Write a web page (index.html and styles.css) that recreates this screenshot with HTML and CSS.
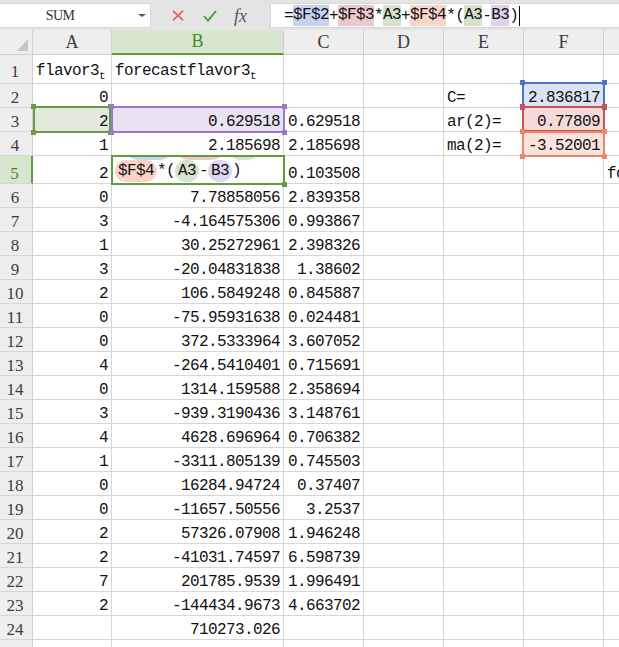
FILE: index.html
```html
<!DOCTYPE html>
<html>
<head>
<meta charset="utf-8">
<title>Sheet</title>
<link rel="stylesheet" href="styles.css">
</head>
<body>
<div class="app">
  <div class="toolbar">
    <div class="namebox"><span class="name">SUM</span><span class="dd"></span></div>
    <div class="tools">
      <svg class="ico-x" width="12" height="11" viewBox="0 0 12 11"><path d="M1 0.8 L11 10.2 M11 0.8 L1 10.2" stroke="#e0605c" stroke-width="1.6" fill="none"/></svg>
      <svg class="ico-ok" width="14" height="12" viewBox="0 0 14 12"><path d="M1 6 L5 10.5 L13 1" stroke="#3f9a3f" stroke-width="1.8" fill="none"/></svg>
      <span class="fx">fx</span>
    </div>
    <div class="formula">=<span class="hl hb">$F$2</span>+<span class="hl hr">$F$3</span>*<span class="hl hg">A3</span>+<span class="hl hs">$F$4</span>*(<span class="hl hg">A3</span>-<span class="hl hp">B3</span>)<span class="caret"></span></div>
  </div>

  <div class="sheet">
    <div class="c corner"><span class="tri"></span></div>
    <div class="c ch">A</div><div class="c ch sel">B</div><div class="c ch">C</div><div class="c ch">D</div><div class="c ch">E</div><div class="c ch">F</div><div class="c ch"></div>

    <div class="c rh r1">1</div><div class="c t r1"><span>flavor3<sub>t</sub></span></div><div class="c t r1"><span>forecastflavor3<sub>t</sub></span></div><div class="c"></div><div class="c"></div><div class="c"></div><div class="c"></div><div class="c"></div>

    <div class="c rh">2</div><div class="c n">0</div><div class="c"></div><div class="c"></div><div class="c"></div><div class="c t">C=</div><div class="c n fb">2.836817</div><div class="c"></div>

    <div class="c rh">3</div><div class="c n fa">2</div><div class="c n fp">0.629518</div><div class="c n">0.629518</div><div class="c"></div><div class="c t">ar(2)=</div><div class="c n fr">0.77809</div><div class="c"></div>

    <div class="c rh">4</div><div class="c n">1</div><div class="c n">2.185698</div><div class="c n">2.185698</div><div class="c"></div><div class="c t">ma(2)=</div><div class="c n fs">-3.52001</div><div class="c"></div>

    <div class="c rh sel">5</div><div class="c n">2</div>
    <div class="c editor">
      <div class="ghost"><span class="gp pb g1"></span><span class="gp pr g2"></span><span class="gp pg g3"></span></div>
      <div class="line"><span class="pill ps">$F$4</span>*(<span class="pill pg">A3</span>-<span class="pill pp">B3</span>)</div>
    </div>
    <div class="c n">0.103508</div><div class="c"></div><div class="c"></div><div class="c"></div><div class="c t">fo</div>

    <div class="c rh">6</div><div class="c n">0</div><div class="c n">7.78858056</div><div class="c n">2.839358</div><div class="c"></div><div class="c"></div><div class="c"></div><div class="c"></div>
    <div class="c rh">7</div><div class="c n">3</div><div class="c n">-4.164575306</div><div class="c n">0.993867</div><div class="c"></div><div class="c"></div><div class="c"></div><div class="c"></div>
    <div class="c rh">8</div><div class="c n">1</div><div class="c n">30.25272961</div><div class="c n">2.398326</div><div class="c"></div><div class="c"></div><div class="c"></div><div class="c"></div>
    <div class="c rh">9</div><div class="c n">3</div><div class="c n">-20.04831838</div><div class="c n">1.38602</div><div class="c"></div><div class="c"></div><div class="c"></div><div class="c"></div>
    <div class="c rh">10</div><div class="c n">2</div><div class="c n">106.5849248</div><div class="c n">0.845887</div><div class="c"></div><div class="c"></div><div class="c"></div><div class="c"></div>
    <div class="c rh">11</div><div class="c n">0</div><div class="c n">-75.95931638</div><div class="c n">0.024481</div><div class="c"></div><div class="c"></div><div class="c"></div><div class="c"></div>
    <div class="c rh">12</div><div class="c n">0</div><div class="c n">372.5333964</div><div class="c n">3.607052</div><div class="c"></div><div class="c"></div><div class="c"></div><div class="c"></div>
    <div class="c rh">13</div><div class="c n">4</div><div class="c n">-264.5410401</div><div class="c n">0.715691</div><div class="c"></div><div class="c"></div><div class="c"></div><div class="c"></div>
    <div class="c rh">14</div><div class="c n">0</div><div class="c n">1314.159588</div><div class="c n">2.358694</div><div class="c"></div><div class="c"></div><div class="c"></div><div class="c"></div>
    <div class="c rh">15</div><div class="c n">3</div><div class="c n">-939.3190436</div><div class="c n">3.148761</div><div class="c"></div><div class="c"></div><div class="c"></div><div class="c"></div>
    <div class="c rh">16</div><div class="c n">4</div><div class="c n">4628.696964</div><div class="c n">0.706382</div><div class="c"></div><div class="c"></div><div class="c"></div><div class="c"></div>
    <div class="c rh">17</div><div class="c n">1</div><div class="c n">-3311.805139</div><div class="c n">0.745503</div><div class="c"></div><div class="c"></div><div class="c"></div><div class="c"></div>
    <div class="c rh">18</div><div class="c n">0</div><div class="c n">16284.94724</div><div class="c n">0.37407</div><div class="c"></div><div class="c"></div><div class="c"></div><div class="c"></div>
    <div class="c rh">19</div><div class="c n">0</div><div class="c n">-11657.50556</div><div class="c n">3.2537</div><div class="c"></div><div class="c"></div><div class="c"></div><div class="c"></div>
    <div class="c rh">20</div><div class="c n">2</div><div class="c n">57326.07908</div><div class="c n">1.946248</div><div class="c"></div><div class="c"></div><div class="c"></div><div class="c"></div>
    <div class="c rh">21</div><div class="c n">2</div><div class="c n">-41031.74597</div><div class="c n">6.598739</div><div class="c"></div><div class="c"></div><div class="c"></div><div class="c"></div>
    <div class="c rh">22</div><div class="c n">7</div><div class="c n">201785.9539</div><div class="c n">1.996491</div><div class="c"></div><div class="c"></div><div class="c"></div><div class="c"></div>
    <div class="c rh">23</div><div class="c n">2</div><div class="c n">-144434.9673</div><div class="c n">4.663702</div><div class="c"></div><div class="c"></div><div class="c"></div><div class="c"></div>
    <div class="c rh">24</div><div class="c"></div><div class="c n">710273.026</div><div class="c"></div><div class="c"></div><div class="c"></div><div class="c"></div><div class="c"></div>
    <div class="c rh"></div><div class="c"></div><div class="c"></div><div class="c"></div><div class="c"></div><div class="c"></div><div class="c"></div><div class="c"></div>

    <div class="range rg-a3"><i class="h tl"></i><i class="h tr"></i><i class="h bl"></i><i class="h br"></i></div>
    <div class="range rg-b3"><i class="h tl"></i><i class="h tr"></i><i class="h bl"></i><i class="h br"></i></div>
    <div class="range rg-f2"><i class="h tl"></i><i class="h tr"></i><i class="h bl"></i><i class="h br"></i></div>
    <div class="range rg-f3"><i class="h tl"></i><i class="h tr"></i><i class="h bl"></i><i class="h br"></i></div>
    <div class="range rg-f4"><i class="h tl"></i><i class="h tr"></i><i class="h bl"></i><i class="h br"></i></div>
    <div class="range rg-b5"><i class="h br"></i></div>
  </div>
</div>
</body>
</html>
```

FILE: styles.css
```css
* { box-sizing: border-box; margin: 0; padding: 0; }
html, body { background: #fff; }
body { width: 619px; height: 647px; overflow: hidden; font-family: "Liberation Mono", monospace; color: #111; }

.toolbar { display: flex; height: 30px; background: #e4e4e4; padding: 3px 0 2px; }
.namebox { width: 151px; height: 25px; background: #fff; border: 1px solid #d8d8d8; border-left: none; display: flex; align-items: center; }
.name { flex: 1; text-align: center; padding-right: 18px; font-family: "Liberation Serif", serif; font-size: 14px; letter-spacing: -0.6px; color: #333; }
.dd { width: 0; height: 0; border-left: 4px solid transparent; border-right: 4px solid transparent; border-top: 3px solid #555; margin-right: 4px; }

.tools { width: 119px; display: flex; align-items: center; }
.ico-x { margin-left: 21px; }
.ico-ok { margin-left: 19px; }
.fx { margin-left: 17px; font-family: "Liberation Serif", serif; font-style: italic; font-size: 18px; color: #555; line-height: 18px; }

.formula { flex: 1; height: 25px; background: #fff; border: 1px solid #d8d8d8; border-right: none; display: flex; align-items: center; padding-left: 13px; font-size: 16px; letter-spacing: -0.6px; white-space: pre; }
.hl { display: inline-block; height: 21px; line-height: 21px; }
.hb { background: #c6d3f2; }
.hr { background: #ecc8c8; }
.hg { background: #d4e1cb; }
.hs { background: #f9d5cb; }
.hp { background: #dfd2ef; }
.caret { display: inline-block; width: 1px; height: 20px; background: #000; margin-left: 1px; }

.sheet { position: relative; display: grid; grid-template-columns: 33px 79px 172px 80px 80px 80px 80px 80px; grid-template-rows: 25px 29px 24px 24px 24px 28px repeat(20, 24px); width: 619px; height: 617px; overflow: hidden; }

.c { border-right: 1px solid #d6d6d6; border-bottom: 1px solid #d6d6d6; display: flex; align-items: flex-end; font-size: 16px; letter-spacing: -0.6px; line-height: 17px; white-space: nowrap; }
.n { justify-content: flex-end; padding-right: 3px; }
.t { padding-left: 3px; }
.r1 { padding-bottom: 3px; }
sub { font-size: 11px; vertical-align: -4px; line-height: 0; letter-spacing: 0; }

.corner { background: #eeeeee; border-right-color: #d0d0d0; border-bottom-color: #d0d0d0; justify-content: flex-end; padding: 0 4px 3px 0; }
.tri { width: 0; height: 0; border-left: 11px solid transparent; border-bottom: 12px solid #c6c6c6; }
.ch { background: #eeeeee; border-right-color: #d0d0d0; border-bottom-color: #d0d0d0; justify-content: center; align-items: center; font-family: "Liberation Serif", serif; font-size: 18px; letter-spacing: 0; color: #3c3c3c; }
.ch.sel { background: #d8e6d0; border-bottom: 2px solid #5e9c3c; color: #3f8a26; }
.rh { background: #eeeeee; border-right-color: #d0d0d0; border-bottom-color: #d6d6d6; justify-content: center; padding-right: 2px; padding-bottom: 1px; font-family: "Liberation Serif", serif; font-size: 17px; letter-spacing: 0; color: #3c3c3c; }
.rh.r1 { padding-bottom: 3px; }
.rh.sel { background: #d8e6d0; border-right: 2px solid #5e9c3c; color: #3f8a26; }

.fa { background: #e2eadc; }
.fp { background: #e9e2f2; }
.fb { background: #dce3f4; }
.fr { background: #f4dbda; }
.fs { background: #fbe3db; }

.editor { background: #fff; flex-direction: column; justify-content: flex-start; align-items: stretch; overflow: hidden; padding-left: 3px; }
.ghost { display: flex; height: 4px; flex-shrink: 0; }
.gp { display: block; height: 4px; border-radius: 0 0 10px 10px / 0 0 4px 4px; }
.g1 { width: 38px; margin-left: 15px; }
.g2 { width: 40px; margin-left: 12px; }
.g3 { width: 24px; margin-left: 12px; }
.line { height: 22px; line-height: 22px; flex-shrink: 0; white-space: pre; }
.pill { display: inline-block; height: 22px; line-height: 22px; padding: 0 3px; border-radius: 11px; }
.pb { background: #c9d5f2; }
.pr { background: #efcaca; }
.pg { background: #d5e2cc; }
.ps { background: #f9d3c9; }
.pp { background: #e0d4f0; }

.range { position: absolute; border: 2px solid; }
.h { position: absolute; width: 5px; height: 5px; background: currentColor; }
.tl { left: -4px; top: -4px; }
.tr { right: -4px; top: -4px; }
.bl { left: -4px; bottom: -4px; }
.br { right: -4px; bottom: -4px; }

.rg-a3 { left: 33px; top: 76px; width: 78px; height: 27px; color: #6a9a48; border-color: #6a9a48; }
.rg-b3 { left: 111px; top: 76px; width: 174px; height: 27px; color: #9a79c8; border-color: #9a79c8; }
.rg-f2 { left: 522px; top: 52px; width: 83px; height: 26px; color: #4d73cd; border-color: #4d73cd; }
.rg-f3 { left: 522px; top: 76px; width: 83px; height: 26px; color: #c9534f; border-color: #c9534f; }
.rg-f4 { left: 522px; top: 101px; width: 83px; height: 26px; color: #e9866b; border-color: #e9866b; }
.rg-b5 { left: 111px; top: 125px; width: 174px; height: 30px; color: #5e9c3c; border-color: #5e9c3c; }
```
